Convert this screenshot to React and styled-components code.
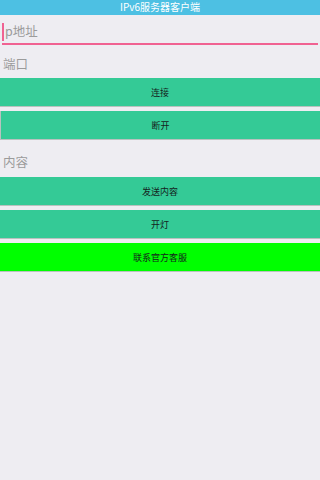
import React from 'react';
import styled, { createGlobalStyle } from 'styled-components';

const GlobalStyle = createGlobalStyle`
  html, body {
    margin: 0;
    padding: 0;
    background-color: #eeedf2;
    font-family: 'Noto Sans CJK SC', 'Noto Sans', sans-serif;
  }
`;

const Page = styled.div`
  width: 100%;
  min-height: 480px;
  display: flex;
  flex-direction: column;
  background-color: #eeedf2;
`;

const Header = styled.header`
  height: 15px;
  background-color: #4dc0e3;
  display: flex;
  justify-content: center;
  align-items: center;
`;

const Title = styled.h1`
  margin: 0 0 2px 0;
  font-size: 10px;
  line-height: 12px;
  font-weight: 400;
  color: #ffffff;
  cursor: default;
`;

const Field = styled.div`
  height: ${(props) => props.height}px;
  margin: 0 2px;
  display: flex;
  align-items: center;
  position: relative;
  box-sizing: border-box;
  border-bottom: ${(props) => (props.focused ? '2px solid #f06292' : 'none')};
`;

const Cursor = styled.span`
  position: absolute;
  left: 0;
  top: 8px;
  width: 2px;
  height: 18px;
  background-color: #f06292;
`;

const Placeholder = styled.span`
  font-size: 12.5px;
  color: #9b9b9b;
  padding-left: ${(props) => (props.focused ? '3px' : '1px')};
  margin-top: ${(props) => props.offset || 0}px;
`;

const ButtonGroup = styled.div`
  display: flex;
  flex-direction: column;
  gap: 4px;
`;

const Button = styled.button`
  height: 29px;
  width: 100%;
  margin: 0;
  padding: 0;
  box-sizing: border-box;
  border: none;
  border-bottom: 1px solid #b9c2bf;
  ${(props) => props.edged && 'border-left: 1px solid #b9c2bf;'}
  background-color: ${(props) => (props.bright ? '#00ff00' : '#34ca96')};
  color: #15231d;
  font-family: 'Noto Sans CJK SC', 'Noto Sans', sans-serif;
  font-size: 9px;
  cursor: pointer;
`;

function App() {
  return (
    <Page>
      <GlobalStyle />
      <Header>
        <Title>IPv6服务器客户端</Title>
      </Header>
      <Field height={30} focused>
        <Cursor />
        <Placeholder focused offset={2}>p地址</Placeholder>
      </Field>
      <Field height={33}>
        <Placeholder offset={4}>端口</Placeholder>
      </Field>
      <ButtonGroup>
        <Button>连接</Button>
        <Button edged>断开</Button>
      </ButtonGroup>
      <Field height={37}>
        <Placeholder offset={6}>内容</Placeholder>
      </Field>
      <ButtonGroup>
        <Button>发送内容</Button>
        <Button>开灯</Button>
        <Button bright>联系官方客服</Button>
      </ButtonGroup>
    </Page>
  );
}

export default App;
